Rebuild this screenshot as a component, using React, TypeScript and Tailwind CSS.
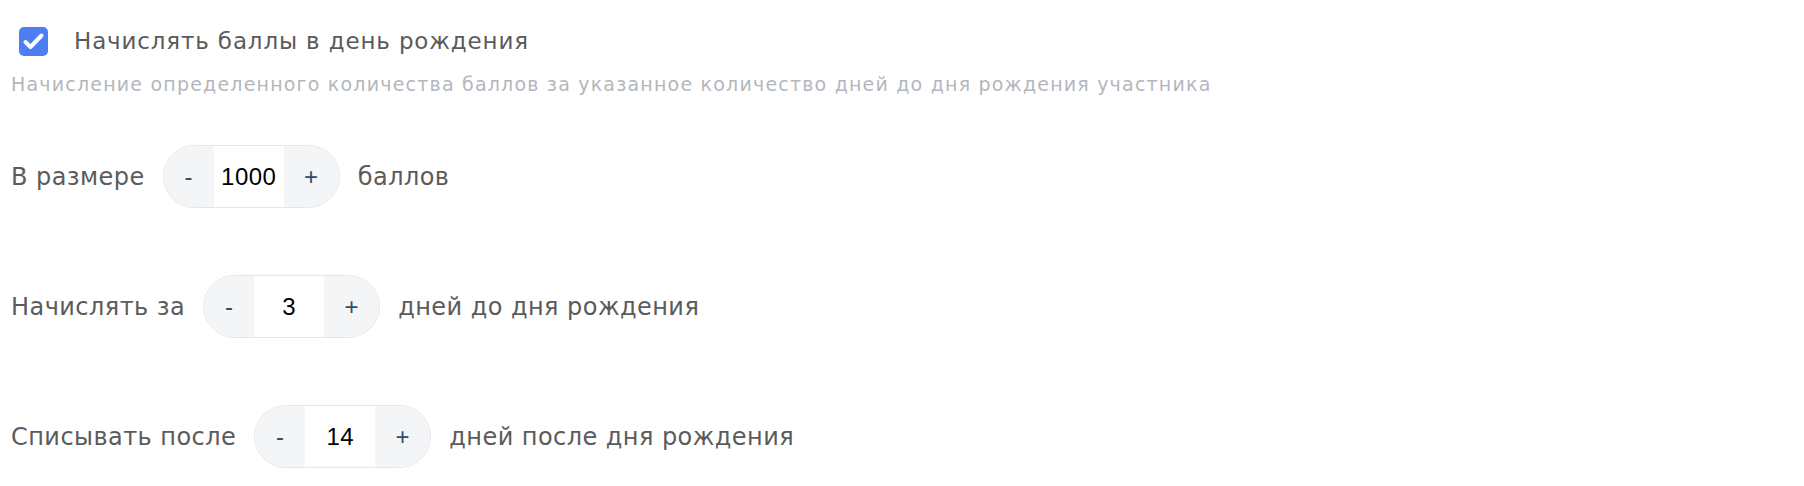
import { useState } from "react";

const FONT = "font-['DejaVu_Sans',sans-serif]";

function Stepper({ value }: { value: number }) {
  return (
    <div className="flex h-[63px] shrink-0 overflow-hidden rounded-full border border-[#e4e6eb]">
      <button
        type="button"
        className="flex w-[50px] items-center justify-center bg-[#f4f5f7] font-['Liberation_Sans',sans-serif] text-[24px] text-[#2f4b6b]"
      >
        -
      </button>
      <input
        readOnly
        value={value}
        className="w-[70px] bg-white text-center font-['Liberation_Sans',sans-serif] text-[24px] text-black outline-none"
      />
      <button
        type="button"
        className="flex w-[55px] items-center justify-center bg-[#f4f5f7] font-['Liberation_Sans',sans-serif] text-[24px] text-[#2f4b6b]"
      >
        +
      </button>
    </div>
  );
}

function Row({ before, value, after }: { before: string; value: number; after: string }) {
  return (
    <div className="flex h-[63px] items-center gap-[18px] text-[24px] tracking-[0.45px] text-[#5b5b5b]">
      <span>{before}</span>
      <Stepper value={value} />
      <span>{after}</span>
    </div>
  );
}

export default function App() {
  const [checked, setChecked] = useState(true);

  return (
    <div className={`min-h-screen bg-white pl-[11px] pt-[27px] ${FONT}`}>
      <label className="flex h-[29px] cursor-pointer items-center gap-[26px] pl-[8px]">
        <span
          onClick={() => setChecked(!checked)}
          className={`flex h-[29px] w-[29px] shrink-0 items-center justify-center rounded-[5px] ${
            checked ? "bg-[#4d7ef3]" : "border border-gray-300 bg-white"
          }`}
        >
          {checked && (
            <svg width="29" height="29" viewBox="0 0 29 29" fill="none">
              <path
                d="M6.5 15l5 5L22.5 8.5"
                stroke="white"
                strokeWidth="4"
                strokeLinecap="round"
                strokeLinejoin="round"
              />
            </svg>
          )}
        </span>
        <span className="text-[23px] tracking-[0.85px] text-[#5b5b5b]">
          Начислять баллы в день рождения
        </span>
      </label>
      <p className="mt-[15px] text-[19px] leading-[26px] tracking-[1.2px] text-[#b3b7bd]">
        Начисление определенного количества баллов за указанное количество дней до дня рождения участника
      </p>
      <div className="mt-[48px] flex flex-col gap-[67px]">
        <Row before="В размере" value={1000} after="баллов" />
        <Row before="Начислять за" value={3} after="дней до дня рождения" />
        <Row before="Списывать после" value={14} after="дней после дня рождения" />
      </div>
    </div>
  );
}
